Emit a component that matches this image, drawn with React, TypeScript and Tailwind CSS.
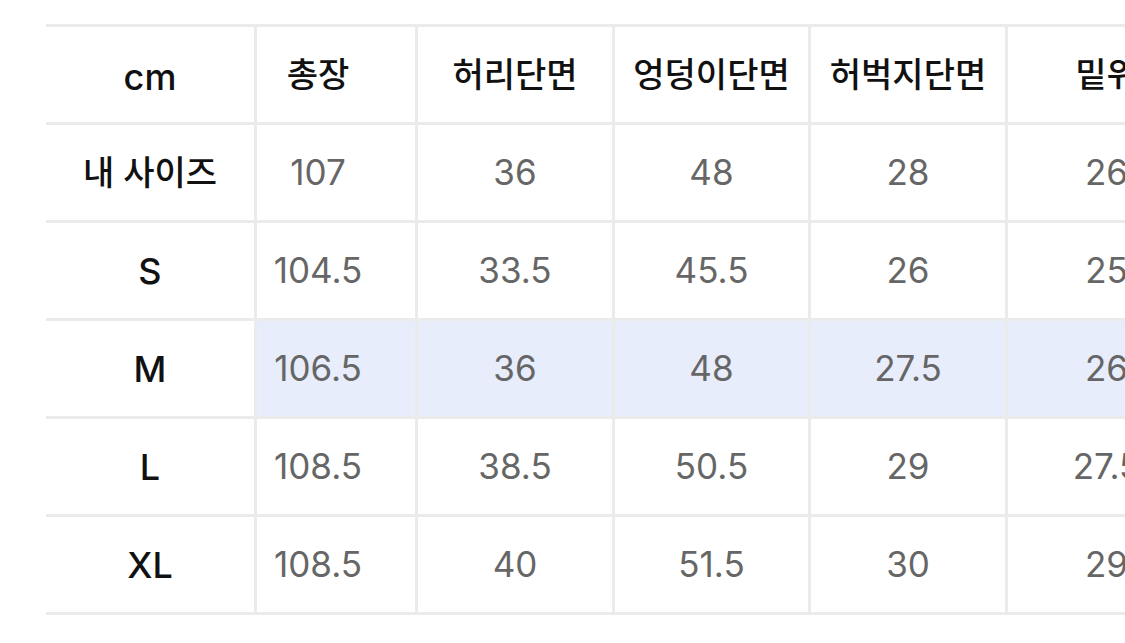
import React from 'react'

const HEADERS = ['cm', '총장', '허리단면', '엉덩이단면', '허벅지단면', '밑위']

const ROWS: { label: string; values: string[]; mine?: boolean; active?: boolean }[] = [
  { label: '내 사이즈', values: ['107', '36', '48', '28', '26'], mine: true },
  { label: 'S', values: ['104.5', '33.5', '45.5', '26', '25'] },
  { label: 'M', values: ['106.5', '36', '48', '27.5', '26'], active: true },
  { label: 'L', values: ['108.5', '38.5', '50.5', '29', '27.5'] },
  { label: 'XL', values: ['108.5', '40', '51.5', '30', '29'] },
]

const font = { fontFamily: 'Inter, "Noto Sans CJK KR", sans-serif' }

function Cell({
  children,
  col,
  className = '',
}: {
  children: React.ReactNode
  col: number
  className?: string
}) {
  return (
    <div
      className={`h-[98px] box-border border-r-[3px] border-b-[3px] border-[#ebebeb] flex items-center justify-center whitespace-nowrap ${
        col === 1 ? 'pr-[36px]' : ''
      } ${className}`}
    >
      {children}
    </div>
  )
}

export default function App() {
  return (
    <div className="w-[1125px] h-[643px] bg-white overflow-hidden" style={font}>
      <div className="ml-[46px] mt-[24px] w-[1162px] border-t-[3px] border-[#ebebeb] grid grid-cols-[211px_161px_197px_196px_197px_200px]">
        {HEADERS.map((h, i) => (
          <Cell key={h} col={i}>
            <span
              className={`font-medium text-[#111] ${
                i === 0 ? 'text-[36px] pt-[4px]' : 'text-[34px]'
              }`}
            >
              {h}
            </span>
          </Cell>
        ))}

        {ROWS.map((row) => (
          <React.Fragment key={row.label}>
            <Cell col={0}>
              <span
                className={`font-medium text-[#111] ${
                  row.mine ? 'text-[34px]' : 'text-[36px]'
                }`}
              >
                {row.label}
              </span>
            </Cell>
            {row.values.map((v, i) => (
              <Cell key={i} col={i + 1} className={row.active ? 'bg-[#e8edfc]' : ''}>
                <span className="text-[35px] text-[#666666]">{v}</span>
              </Cell>
            ))}
          </React.Fragment>
        ))}
      </div>
    </div>
  )
}
